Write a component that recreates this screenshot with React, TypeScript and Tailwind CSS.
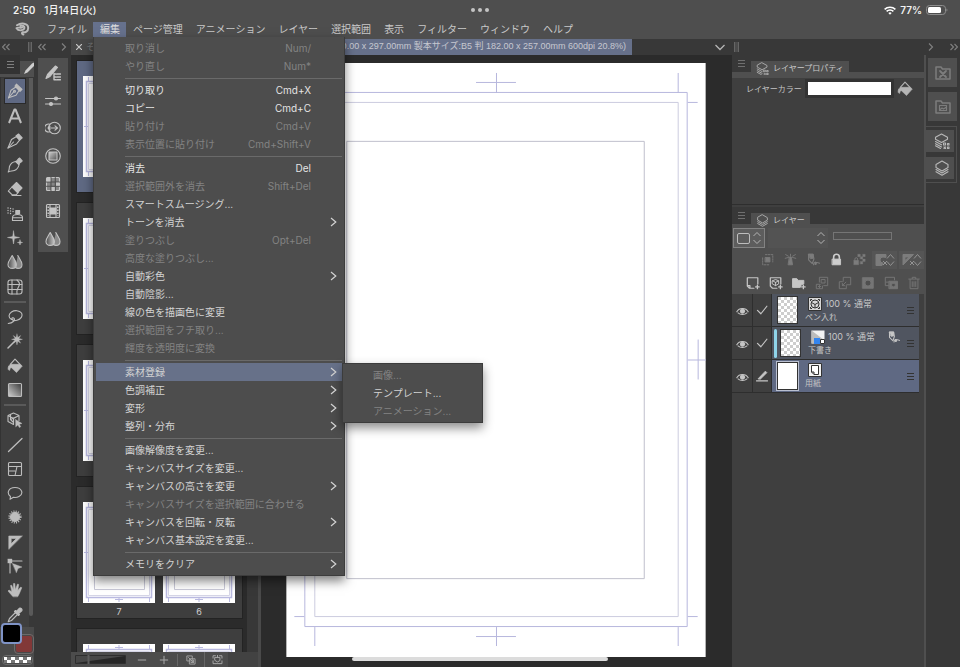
import { Fragment, type ReactNode } from "react";
import clsx from "clsx";

type MenuItem = {
  label: string;
  keys?: string;
  off?: boolean;
  arrow?: boolean;
  sub?: MenuItem[];
};

const MENUS = [
  "ファイル",
  "編集",
  "ページ管理",
  "アニメーション",
  "レイヤー",
  "選択範囲",
  "表示",
  "フィルター",
  "ウィンドウ",
  "ヘルプ",
];

const EDIT_MENU: MenuItem[][] = [
  [
    { label: "取り消し", keys: "Num/", off: true },
    { label: "やり直し", keys: "Num*", off: true },
  ],
  [
    { label: "切り取り", keys: "Cmd+X" },
    { label: "コピー", keys: "Cmd+C" },
    { label: "貼り付け", keys: "Cmd+V", off: true },
    { label: "表示位置に貼り付け", keys: "Cmd+Shift+V", off: true },
  ],
  [
    { label: "消去", keys: "Del" },
    { label: "選択範囲外を消去", keys: "Shift+Del", off: true },
    { label: "スマートスムージング..." },
    { label: "トーンを消去", arrow: true },
    { label: "塗りつぶし", keys: "Opt+Del", off: true },
    { label: "高度な塗りつぶし...", off: true },
    { label: "自動彩色", arrow: true },
    { label: "自動陰影..." },
    { label: "線の色を描画色に変更" },
    { label: "選択範囲をフチ取り...", off: true },
    { label: "輝度を透明度に変換", off: true },
  ],
  [
    {
      label: "素材登録",
      arrow: true,
      sub: [
        { label: "画像...", off: true },
        { label: "テンプレート..." },
        { label: "アニメーション...", off: true },
      ],
    },
    { label: "色調補正", arrow: true },
    { label: "変形", arrow: true },
    { label: "整列・分布", arrow: true },
  ],
  [
    { label: "画像解像度を変更..." },
    { label: "キャンバスサイズを変更..." },
    { label: "キャンバスの高さを変更", arrow: true },
    { label: "キャンバスサイズを選択範囲に合わせる", off: true },
    { label: "キャンバスを回転・反転", arrow: true },
    { label: "キャンバス基本設定を変更..." },
  ],
  [{ label: "メモリをクリア", arrow: true }],
];

/* ---------- icons ---------- */

function Icon({ children, size = 16 }: { children: ReactNode; size?: number }) {
  return (
    <svg
      width={size}
      height={size}
      viewBox="0 0 16 16"
      fill="none"
      stroke="currentColor"
      strokeWidth="1.1"
      strokeLinecap="round"
      strokeLinejoin="round"
      className="shrink-0"
      aria-hidden="true"
    >
      {children}
    </svg>
  );
}

const drops = (
  <>
    <defs>
      <linearGradient id="drop" x1="0" x2="1">
        <stop offset="0" stopColor="#4a4a4a" />
        <stop offset="1" stopColor="#c8c8c8" />
      </linearGradient>
    </defs>
    <path d="M10.8 1.6c1.6 3 4.2 5.6 4.2 8.8 0 2.5-1.8 4-4 4-1 0-1.8-.3-2.6-.9" fill="#8a8a8a" />
    <path d="M5.2 1.6c1.6 3 4.2 5.6 4.2 8.8 0 2.5-1.8 4-4.2 4s-4.2-1.5-4.2-4c0-3.2 2.600-5.8 4.200-8.800z" fill="url(#drop)" />
  </>
);

const bucket = (
  <>
    <path d="M3.300 6.300 8 1.200l5 5.100" />
    <path d="M4 6.300h9.300l2 1.700-5.800 6.500-5-4.700-1.300.2-.5 2.300c-1.800.4-2-2.300-1.100-4.200z" fill="currentColor" strokeWidth=".6" />
  </>
);

const layers = (
  <>
    <path d="M8 1 14 4.500v3L8 11 2 7.500v-3z" />
    <path d="M2 9.500 8 13l6-3.500M2 11.700 8 15.200l6-3.500" />
  </>
);

const layerProps = (
  <>
    <path d="M7.500 1 13.500 4.300v2L7.500 9.500 1.500 6.300v-2z" />
    <path d="M1.500 8.500 7.500 11.800M1.500 10.700l6 3.300M1.500 12.800l5 2.700" />
    <path d="M9.500 10h2v2h-2zM13.500 10.500h1.500v1.500h-1.500zM10 14l1.500 1.500M11.500 14 10 15.500M13.500 14h1.500v1.500h-1.500z" />
  </>
);

type Tool = { name: string; icon: ReactNode };

const TOOLS: Tool[][] = [
  [
    {
      name: "ペン",
      icon: (
        <>
          <path d="M1.500 14.800 4 7.200l5.200-3.400 3.200 3.200-3.400 5.200z" />
          <path d="M9.500 1.200 15 6.300l-2 2L8 3z" fill="currentColor" />
          <path d="M1.500 14.800 7 8.500" />
          <circle cx="7.500" cy="8.200" r="1" />
        </>
      ),
    },
    { name: "テキスト", icon: <path d="M2 15 7.500 1.500h1L14 15M4.500 10.500h7" strokeWidth="2" strokeLinecap="butt" /> },
    {
      name: "鉛筆",
      icon: (
        <>
          <path d="M1 15 4.500 6.500 9.500 3.500 12.800 6.800 9.500 11z" />
          <path d="M1 15 6.500 9" />
          <path d="M9 3 11.500 1 15.200 4.800 12.600 7.200z" fill="currentColor" />
        </>
      ),
    },
    {
      name: "筆",
      icon: (
        <>
          <path d="M1.200 15c1.300-2 .8-3.500 1.300-5.500C3.300 6.800 6 5 8.700 4.500L12 7.800c-.7 2.700-2.200 4.800-4.700 5.700-2 .8-4 .3-6.100 1.500z" />
          <path d="M9 4.200C10.500 4 10.800 1.500 12.500 1l2.700 2.800C14.500 5.500 12 5.500 12 7.500z" fill="currentColor" />
        </>
      ),
    },
    {
      name: "消しゴム",
      icon: (
        <>
          <path d="M9.500 1.500 15 7l-4.500 4.500L5 6z" fill="currentColor" />
          <path d="M5 6 1.300 10 5 13.700h4.300l2-2.200M5 14.500h9" />
        </>
      ),
    },
    {
      name: "エアブラシ",
      icon: (
        <>
          <path d="M5.500 14.500v-3c0-2 2-3 5-3s5 1 5 3v3z" />
          <path d="M8.800 7.500V4.500h3.800v3z" fill="currentColor" />
          <path d="M6 11.800h9" />
          <path d="M1 2h.1M3.500 2.500h.1M6 3h.1M1 4.500h.1M3.500 5h.1M6 5.500h.1M1 7h.1M3.500 7.500h.1" strokeWidth="1.300" />
        </>
      ),
    },
    {
      name: "デコレーション",
      icon: (
        <path
          d="M6.500 1 7.400 6.600 12.500 7.500 7.400 8.400 6.500 14 5.600 8.400.5 7.500 5.600 6.600zM13 10l.5 2 2 .5-2 .5-.5 2-.5-2-2-.5 2-.5z"
          fill="currentColor"
          strokeWidth=".5"
        />
      ),
    },
    { name: "色混ぜ", icon: drops },
    {
      name: "ゆがみ",
      icon: (
        <>
          <rect x="1" y="1" width="14" height="14" rx="2.500" />
          <path d="M5 1v14M1 5.500h9M1 10.500h9M10 1c3 3 3 4 1.500 7S9 12 10 15M10 5.500h5M10 10.500h5" />
        </>
      ),
    },
  ],
  [
    {
      name: "投げなわ",
      icon: (
        <path d="M4.500 10.500C1 8.500 1.500 5 4.500 3s8-1.800 10 1c1.500 3-.5 6.200-4.500 7.200-2.500.7-4.500.2-5-1.200s1.500-1.800 2.200-.5c.8 1.800-1.200 4.500-6 5" />
      ),
    },
    {
      name: "自動選択",
      icon: (
        <>
          <path d="M1 15 8 8" strokeWidth="1.500" />
          <path d="m10 1 .8 3.400L13.700 2.500l-1.800 3 3.600.8-3.600.9 1.800 3-2.900-1.900L10 12l-.9-3.700L6.200 10.200l1.900-3L4.500 6.300l3.600-.8-1.900-3 2.900 1.900z" fill="currentColor" strokeWidth=".3" />
        </>
      ),
    },
    { name: "塗りつぶし", icon: bucket },
    {
      name: "グラデーション",
      icon: (
        <>
          <defs>
            <linearGradient id="grad" x1="1" y1="0" x2="0" y2="1">
              <stop offset="0" stopColor="#3a3a3a" />
              <stop offset="1" stopColor="#d0d0d0" />
            </linearGradient>
          </defs>
          <rect x="1.500" y="1.500" width="13" height="13" rx="1" fill="url(#grad)" />
        </>
      ),
    },
  ],
  [
    {
      name: "操作",
      icon: (
        <>
          <path d="M6.500 1 12 3.500v5M6.500 1 1 3.500v6l5.500 3V6.500M1 3.500l5.500 3 5.500-3M3.500 2.500v5l3 3M3.500 7.500 9 5" />
          <path d="m8.500 7.500 6.500 4-2.700.7 1.500 2.500-1.500.8-1.400-2.600-2 1.800z" fill="currentColor" strokeWidth=".4" />
        </>
      ),
    },
    { name: "直線", icon: <path d="M1.500 14.500 15 1.500" strokeWidth="1.300" /> },
    {
      name: "コマ枠",
      icon: (
        <>
          <rect x="1.500" y="1.500" width="13" height="13" rx="1" />
          <path d="M1.500 5.500h13M1.500 10h6.500M10 5.500l-2 9" />
        </>
      ),
    },
    { name: "フキダシ", icon: <path d="M3.500 11.500C-.5 8.500 1 2.500 8 2.500s9 6.500 4 9c-2 1-4.300 1-5.500.8L3 14.300z" /> },
    {
      name: "流線",
      icon: (
        <>
          <circle cx="8" cy="8" r="4.500" fill="currentColor" />
          <circle cx="8" cy="8" r="5.700" strokeWidth="1.800" strokeDasharray="1 1.240" strokeLinecap="butt" />
        </>
      ),
    },
    { name: "定規", icon: <path d="M1.800 15V2h13.200zM4.200 9.500V4.500h5z" fill="currentColor" fillRule="evenodd" strokeWidth=".6" /> },
    {
      name: "線修正",
      icon: (
        <>
          <path d="M3 5v10M5 3h10" />
          <path d="M1 1h4v4H1zM5.500 5.500 15 9l-4 1.500L9.500 14.500z" fill="currentColor" strokeWidth=".4" />
        </>
      ),
    },
    {
      name: "手のひら",
      icon: (
        <path
          d="M5.800 14.500 1 9l1-1 2.800 1.800L3.500 3.500l1.200-.3 1.800 4.500V1.500h1.300l.6 6L10.500 2l1.200.4-.9 6L13.800 5l1 .7-2.500 6-1.500 2.800z"
          fill="currentColor"
          strokeWidth=".5"
        />
      ),
    },
    {
      name: "スポイト",
      icon: (
        <>
          <path d="M1.200 14.800 2.500 11.500 8.500 5.500l2 2-6 6z" />
          <path d="m7.500 4.500 4 4 1-1-1-1L14.800 3.800c.8-1.500-1-3.300-2.500-2.500L9.500 4.300 8.500 3.500z" fill="currentColor" />
        </>
      ),
    },
  ],
];

const PALETTES: Tool[] = [
  {
    name: "サブツール",
    icon: (
      <>
        <path d="M1 13.500 2.500 9.500 10.500 1l2 1.500-7.500 9z" fill="currentColor" />
        <path d="M9 8.500v6M9 9h2M9 12h2M9 14.800h2M12 9h3.500M12 12h3.500M12 14.800h3.500" strokeWidth="1.400" />
      </>
    ),
  },
  {
    name: "ツールプロパティ",
    icon: (
      <>
        <path d="M.5 5.500h15M.5 11h15" />
        <circle cx="11" cy="5.500" r="1.500" fill="currentColor" />
        <circle cx="6" cy="11" r="1.500" fill="currentColor" />
      </>
    ),
  },
  {
    name: "ブラシサイズ",
    icon: (
      <>
        <circle cx="9.500" cy="8" r="5.800" />
        <path d="M4.800 4.200a4 4 0 1 0 0 7.600M3.500 8h8.500M10 5.800 12.500 8 10 10.200M5 6.300 3 8l2 1.700" />
      </>
    ),
  },
  {
    name: "カラーサークル",
    icon: (
      <>
        <defs>
          <linearGradient id="sq" x1="1" y1="1" x2="0" y2="0">
            <stop offset="0" stopColor="#555" />
            <stop offset="1" stopColor="#ccc" />
          </linearGradient>
        </defs>
        <circle cx="8" cy="8" r="7.300" />
        <rect x="4" y="4" width="8" height="8" fill="url(#sq)" />
      </>
    ),
  },
  {
    name: "カラーセット",
    icon: (
      <>
        <rect x="1.500" y="1.500" width="13" height="13" rx="1" fill="#858585" />
        <path d="M6 1.500v13M10.300 1.500v13M1.500 6h13M1.500 10.300h13" stroke="#4f4f4f" />
        <path d="M2 2h3.500v3.500H2zM11 6.500h3v3.300h-3zM6.500 11h3.300v3.300H6.500z" fill="currentColor" stroke="none" />
      </>
    ),
  },
  {
    name: "タイムライン",
    icon: (
      <>
        <rect x="1.500" y="1.500" width="13" height="13" rx="1" />
        <path d="M5 2v12M11 2v12" />
        <path d="M5 5h6v6H5z" fill="currentColor" />
        <path d="M3.200 3.500v9.500M12.800 3.500v9.500" strokeWidth="1.500" strokeDasharray="1.500 1.500" strokeLinecap="butt" />
      </>
    ),
  },
  { name: "混色", icon: drops },
];

const reference = (
  <>
    <path d="M2 1.500h5.500l1 6L6.500 13 2 8.500z" strokeWidth="1.400" />
    <path d="M2 1.500h5.500v5L4.500 7z" fill="currentColor" />
    <path d="M8 14.500c0-4 4-4 3.500-1.500-.3 1.500-2 1.500-1.500 0 .5-1.200 3-1.500 5.500-.5" strokeWidth="1.400" />
  </>
);

const LAYER_TOGGLES: Tool[] = [
  {
    name: "下のレイヤーでクリッピング",
    icon: (
      <>
        <path d="M2 6v8.500h8.500M5.500 2h9v9" strokeDasharray="2 1.500" />
        <path d="M5.500 5.500h5.500V11H5.500z" fill="currentColor" />
      </>
    ),
  },
  {
    name: "参照レイヤー",
    icon: (
      <path d="M7 5h2l1.500 9.500h-5zM8 1.500V4M2 2l3.500 2M14 2l-3.500 2M1.500 6.500 5.500 5.500M14.500 6.500l-4-1" fill="currentColor" />
    ),
  },
  { name: "下描きレイヤー", icon: reference },
];

const plus = <path d="M13 10.500v4M11 12.500h4" strokeWidth="1.500" />;

const LAYER_COMMANDS: (Tool & { off?: boolean })[] = [
  {
    name: "新規ラスターレイヤー",
    icon: (
      <>
        <path d="M9 14H4L1.500 11.500V2h12v7M1.500 11H4.500v3" strokeWidth="1.400" />
        {plus}
      </>
    ),
  },
  {
    name: "新規ベクターレイヤー",
    icon: (
      <>
        <path d="M9 14H4L1.500 11.500V2h12v7" strokeWidth="1.400" />
        <path d="M4 5.500 7.500 4 11 5.500v3.500l-3.500 2L4 9zM4 5.500l3.500 1.800L11 5.500M7.500 7.300V11" />
        {plus}
      </>
    ),
  },
  {
    name: "新規レイヤーフォルダー",
    icon: (
      <>
        <path d="M1 3h4.500l1.500 2h6.500v4l-3 1-1 3H1z" fill="currentColor" />
        {plus}
      </>
    ),
  },
  {
    name: "下のレイヤーに転写",
    off: true,
    icon: <path d="M5 7V1.500h9.500V11H10M7.500 4h4v4h-4zM6 9.500H1.500v5h7v-3M6.500 12H4M5.500 10.500 4 12l1.500 1.500" />,
  },
  {
    name: "下のレイヤーと結合",
    off: true,
    icon: <path d="M6 6V1.500h8.500V10H10M9 7 5 11M5 8.500V11h2.500M5 6.500H1.500v8h8V11" />,
  },
  {
    name: "レイヤーマスクを作成",
    off: true,
    icon: <path d="M2 2h12v12H2zM8 4.500a3.500 3.500 0 1 0 0 7 3.500 3.500 0 0 0 0-7z" fill="currentColor" fillRule="evenodd" />,
  },
  {
    name: "マスクをレイヤーに適用",
    off: true,
    icon: (
      <>
        <path d="M12 4.500v-3H1.500V11H5M2.500 7H5" />
        <path d="M6 6h9.500v8.500H6zM10.800 8a2.200 2.200 0 1 0 0 4.400 2.200 2.200 0 0 0 0-4.400z" fill="currentColor" fillRule="evenodd" />
      </>
    ),
  },
  {
    name: "レイヤーを削除",
    off: true,
    icon: <path d="M2 3.500h12M6 3V1.500h4V3M3.500 4v10.500h9V4M6 6.500v5.500M8 6.500v5.500M10 6.500v5.500" />,
  },
];

function Hamburger() {
  return (
    <svg width="7" height="7" viewBox="0 0 7 7" stroke="currentColor" aria-hidden="true">
      <path d="M0 .5h7M0 3.500h7M0 6.500h7" />
    </svg>
  );
}

function Chevron({ double, left }: { double?: boolean; left?: boolean }) {
  return (
    <svg
      width="8"
      height="8"
      viewBox="0 0 8 8"
      fill="none"
      stroke="currentColor"
      strokeWidth="1.200"
      className={clsx("shrink-0", left && "rotate-180")}
      aria-hidden="true"
    >
      {double ? <path d="M.5 1 3.500 4 .5 7M4.500 1 7.500 4 4.500 7" /> : <path d="M2 .5 5.500 4 2 7.500" />}
    </svg>
  );
}

function UpDown() {
  return (
    <svg width="8" height="14" viewBox="0 0 8 14" fill="none" stroke="#b4b4b4" aria-hidden="true">
      <path d="M.5 5 4 1.500 7.500 5M.5 9 4 12.500 7.500 9" />
    </svg>
  );
}

/* ---------- header ---------- */

function StatusBar() {
  return (
    <div className="grid h-5 grid-cols-3 items-center pl-[13px] pr-3 text-[10px] font-semibold text-[#f2f2f2]">
      <div className="flex gap-[9px]">
        <span>2:50</span>
        <span className="font-medium">1月14日(火)</span>
      </div>
      <div className="flex justify-center gap-[3px]">
        {[0, 1, 2].map((i) => (
          <span key={i} className="size-1 rounded-full bg-[#c4c4c4]" />
        ))}
      </div>
      <div className="flex items-center justify-end gap-1">
        <svg width="12" height="9" viewBox="0 0 12 9" fill="none" stroke="#fff" strokeWidth="1.500" aria-hidden="true">
          <path d="M.6 3.400a7.600 7.600 0 0 1 10.800 0M2.600 5.400a4.800 4.800 0 0 1 6.800 0" />
          <path d="M4.300 7 6 8.800 7.700 7a2.400 2.400 0 0 0-3.400 0z" fill="#fff" stroke="none" />
        </svg>
        <span>77%</span>
        <svg width="22" height="10" viewBox="0 0 22 10" aria-hidden="true">
          <rect x=".5" y=".5" width="19" height="9" rx="3" fill="none" stroke="#8d8d8d" />
          <rect x="2" y="2" width="13" height="6" rx="1.500" fill="#fff" />
          <path d="M20.500 3.500c1.200.4 1.200 2.600 0 3z" fill="#8d8d8d" />
        </svg>
      </div>
    </div>
  );
}

function MenuRow({ item }: { item: MenuItem }) {
  return (
    <li className="relative" role="none">
      <button
        role="menuitem"
        disabled={item.off}
        className={clsx(
          "flex h-[18px] w-full items-center justify-between pl-[29px] pr-[5px] leading-[18px]",
          item.sub && "bg-[#677189]",
          item.off ? "text-[#838383]" : item.keys ? "text-[#e4e4e4]" : "text-[#d2d2d2]"
        )}
      >
        <span>{item.label}</span>
        {item.keys && <span className="pr-[26px]">{item.keys}</span>}
        {item.arrow && (
          <svg width="7" height="10" viewBox="0 0 7 10" fill="none" stroke="currentColor" strokeWidth="1.200" aria-hidden="true">
            <path d="M1 1 5.800 5 1 9" />
          </svg>
        )}
      </button>
      {item.sub && (
        <ul
          role="menu"
          className="absolute left-full top-0 w-[141px] border border-[#3c3c3c] bg-[#4d4d4d] px-px py-[2px] shadow-[0_5px_10px_rgba(0,0,0,0.45)]"
        >
          {item.sub.map((s) => (
            <MenuRow key={s.label} item={s} />
          ))}
        </ul>
      )}
    </li>
  );
}

function EditMenu() {
  return (
    <div
      role="menu"
      className="absolute left-0 top-full z-20 w-[252px] border-x border-b border-[#3c3c3c] bg-[#4d4d4d] px-[2px] py-[2px] shadow-[0_5px_10px_rgba(0,0,0,0.5)]"
    >
      {EDIT_MENU.map((group, i) => (
        <Fragment key={i}>
          {i > 0 && (
            <div className="flex h-1.5 items-center pl-[29px]">
              <hr className="w-full border-[#6a6a6a]" />
            </div>
          )}
          <ul role="none">
            {group.map((item) => (
              <MenuRow key={item.label} item={item} />
            ))}
          </ul>
        </Fragment>
      ))}
    </div>
  );
}

function MenuBar() {
  return (
    <nav className="flex h-[19px] items-start pl-[15px] pt-[2px] text-[10px] text-[#c9c9c9]">
      <svg width="25" height="14" viewBox="0 0 25 14" fill="none" stroke="#b9b9b9" strokeLinecap="round" aria-label="CLIP STUDIO PAINT">
        <path d="M7.500 5.500C5 6.500 3 4.500 1.500 6.200 3.500 9.500 9 8.500 9.500 5.800 9.800 4 7.500 3.200 5.200 3.800" strokeWidth="1.800" />
        <path d="M2 3.300C6 .5 13.200 1 13.200 6c0 3.500-3 4.700-5.400 4.200-1.400.8-.6 2 .6 2.300" strokeWidth="2" />
      </svg>
      {MENUS.map((m) => (
        <div key={m} className="relative">
          <button
            className={clsx(
              "block h-[15px] whitespace-nowrap pl-[7px] pr-[6px] leading-[15px]",
              m === "編集" && "bg-[#66718d] text-[#dedede]"
            )}
          >
            {m}
          </button>
          {m === "編集" && <EditMenu />}
        </div>
      ))}
    </nav>
  );
}

/* ---------- left side ---------- */

function ToolColumn() {
  return (
    <aside className="flex w-[34px] shrink-0 flex-col bg-[#383838]">
      <div className="flex h-4 items-center justify-between pl-[2px] pr-[2px] text-[#7f7f7f]">
        <Chevron double left />
        <span className="h-[10px] w-1 border-x border-[#666] bg-[#4c4c4c]" />
      </div>
      <div className="flex h-[22px] items-end border-b-[3px] border-[#4f4f4f] text-[#7f7f7f]">
        <span className="flex h-[19px] w-5 items-center justify-center bg-[#333]">
          <Hamburger />
        </span>
        <span className="flex h-[13px] flex-1 items-end justify-end bg-[#4f4f4f] text-[#cfcfcf]">
          <svg width="10" height="12" viewBox="0 0 10 12" fill="currentColor" aria-hidden="true">
            <path d="M0 12 1.500 8.500 8 1.500 10 .500V4L3.500 10.500z" />
          </svg>
        </span>
      </div>
      <div className="flex min-h-0 flex-1 border-l border-[#333] pt-px">
        <div className="flex flex-1 flex-col bg-[#3f3f3f] text-[#bdbdbd]">
          {TOOLS.map((group, i) => (
            <Fragment key={i}>
              {i > 0 && <hr className="mx-[3px] my-[2px] border-t-2 border-[#5a5a5a]" />}
              {group.map((t) => (
                <button
                  key={t.name}
                  aria-label={t.name}
                  className={clsx(
                    "mx-[3px] flex min-h-0 flex-1 items-center justify-center",
                    t.name === "ペン" && "border border-[#2a2a2a] bg-[#5f6983]"
                  )}
                >
                  <Icon>{t.icon}</Icon>
                </button>
              ))}
            </Fragment>
          ))}
        </div>
        <div className="w-[5px] bg-[#383838]">
          <div className="h-[98%] w-[4px] rounded-b-sm bg-[#5a5a5a]" />
        </div>
      </div>
      <div className="relative h-10 bg-[#4a4a4a]">
        <button
          aria-label="サブカラー"
          className="absolute left-[14px] top-[7px] size-[20px] rounded-sm border border-[#6b6b6b] bg-[#823838] ring-1 ring-inset ring-[#484848]"
        />
        <button
          aria-label="メインカラー"
          className="absolute -top-1 left-[1px] size-[21px] rounded-sm border-2 border-[#7f93c6] bg-black"
        />
        <button aria-label="透明色" className="absolute bottom-[2px] left-[2px] h-[10px] w-[31px] rounded-sm border border-[#6b6b6b]">
          <svg width="100%" height="100%" aria-hidden="true">
            <defs>
              <pattern id="clear" width="8" height="8" patternUnits="userSpaceOnUse">
                <path d="M0 0h8v8H0z" fill="#777" />
                <path d="M0 0h4v4H0zM4 4h4v4H4z" fill="#fff" />
              </pattern>
            </defs>
            <rect x="1" y="1" width="27" height="6" fill="url(#clear)" />
          </svg>
        </button>
      </div>
    </aside>
  );
}

function PaletteColumn() {
  return (
    <aside className="w-[37px] shrink-0 bg-[#383838] px-[3px] pl-1">
      <div className="flex h-4 items-center justify-between text-[#7f7f7f]">
        <Chevron double left />
        <Chevron />
      </div>
      <div className="mt-[3px] flex h-[194px] w-[30px] flex-col items-center justify-between bg-[#4f4f4f] pb-[5px] pt-[7px] text-[#c4c4c4]">
        {PALETTES.map((p) => (
          <button key={p.name} aria-label={p.name}>
            <Icon>{p.icon}</Icon>
          </button>
        ))}
      </div>
    </aside>
  );
}

function PageThumb() {
  return (
    <svg width="72" height="101" viewBox="0 0 72 101" fill="none" stroke="#b9b9e0" aria-hidden="true">
      <path d="M0 0h72v101H0z" fill="#fff" stroke="none" />
      <path d="M3.500 5.500h65v90h-65z" strokeWidth="1.500" />
      <path d="M5.500 7.500h61v86h-61z" stroke="#d5d5e6" />
      <path d="M11.500 13.500h50v74h-50z" stroke="#c9c9d8" />
      <path d="M5.500 1v4M66.500 1v4M5.500 96v4M66.500 96v4M36 1v5M36 95v5M32 3.500h8M32 97.500h8M1 50.500h4M67 50.500h4" />
    </svg>
  );
}

type Spread = { id: number; labels?: [string, string] };

const SPREADS: Spread[] = [{ id: 0 }, { id: 1 }, { id: 2 }, { id: 3, labels: ["7", "6"] }, { id: 4 }];

function PagesPanel() {
  return (
    <section className="flex w-[190px] shrink-0 flex-col border-r-[3px] border-[#4a4a4a] bg-[#383838]">
      <div className="min-h-0 w-[176px] flex-1 overflow-hidden bg-[#2b2b2b] pl-[5px] pt-[5px]">
        {SPREADS.map((s) => (
          <div
            key={s.id}
            className={clsx(
              "mb-[9px] h-[133px] w-[167px] border border-[#232323] px-[6px] pt-[15px]",
              s.id === 0 ? "bg-[#5f6983]" : "bg-[#3e3e3e]"
            )}
          >
            <div className="flex gap-2 text-center text-[9px] leading-[18px] text-[#cfcfcf]">
              {[0, 1].map((n) => (
                <div key={n}>
                  <PageThumb />
                  {s.labels?.[n]}
                </div>
              ))}
            </div>
          </div>
        ))}
      </div>
      <div className="flex h-[15px] items-center bg-[#424242] text-[#a8a8a8]">
        <div className="flex h-full w-[157px] items-center bg-[#4c4c4c] pl-1">
          <svg width="51" height="9" viewBox="0 0 51 9" aria-hidden="true">
            <path d="M.5.500h50v8H.5z" fill="#484848" stroke="#2e2e2e" />
            <path d="M1 8 50 1v7z" fill="#262626" />
            <path d="M13.500 0v9" stroke="#5d5d5d" strokeWidth="2" />
          </svg>
          <button aria-label="縮小" className="ml-[11px]">
            <Icon size={10}><path d="M2 8h12" strokeWidth="1.600" /></Icon>
          </button>
          <button aria-label="拡大" className="ml-3">
            <Icon size={10}><path d="M2 8h12M8 2v12" strokeWidth="1.600" /></Icon>
          </button>
          <span className="ml-2 h-3 w-px bg-[#666]" />
          <button aria-label="全体表示" className="ml-2">
            <Icon size={10}><path d="M2 1.500h8v8H2zM6 6h8.500v8.500H6zM4 4l8 8M8 12h4V8" strokeWidth="1.400" /></Icon>
          </button>
          <span className="ml-2 h-full w-px bg-[#666]" />
          <button aria-label="表示設定" className="ml-[7px]">
            <Icon size={11}>
              <path d="M5 2.500H1.500v3.500M1.500 10v4H5M11 2.500h3.500v3.500M14.500 10v4H11M4.500 5h7v4.500L8 11.500 4.500 9.500zM5.500 14h5M8 2v3" strokeWidth="1.400" />
            </Icon>
          </button>
        </div>
      </div>
    </section>
  );
}

/* ---------- canvas ---------- */

function Paper() {
  return (
    <svg viewBox="0 0 420 595" className="max-h-full w-[420px] max-w-full" fill="none" aria-label="用紙">
      <path d="M0 0h420v595H0z" fill="#fff" />
      <g stroke="#b7b7dd">
        <path d="M18.500 29.500h383v535h-383z" />
        <path d="M28.500 39.500h364v515h-364z" stroke="#ccccdf" />
        <path d="M60.500 78.500h298v438h-298z" stroke="#c0c0cc" />
        <path d="M28.500 10v20M392.500 10v20M28.500 565v19M392.500 565v19M8 39.500h10M402 39.500h10M8 554.500h10M402 554.500h10" />
        <path d="M210.500 10v20M190 19.500h40M210.500 565v19M190 574.500h40M402 297.500h19M412.500 277v40M-1 297.500h19M8.500 277v40" />
      </g>
    </svg>
  );
}

function Workspace() {
  return (
    <main className="flex min-w-0 flex-1 flex-col">
      <div className="flex h-4 items-center bg-[#383838] text-[9px]">
        <button className="flex h-full w-[150px] shrink-0 items-center gap-1 bg-[#484848] pl-[5px] text-[#777]">
          <svg width="6" height="6" viewBox="0 0 6 6" stroke="#c9c9c9" strokeWidth="1.200" aria-hidden="true">
            <path d="M0 0 6 6M6 0 0 6" />
          </svg>
          その他
        </button>
        <div className="flex h-full w-[411px] min-w-0 items-center justify-end overflow-hidden whitespace-nowrap bg-[#66708a] pr-[6px] font-['Liberation_Sans','Noto_Sans_CJK_JP',sans-serif] text-[#c6c8d0]">
          210.00 x 297.00mm 製本サイズ:B5 判 182.00 x 257.00mm 600dpi 20.8%)
        </div>
        <button aria-label="タブ一覧" className="ml-auto mr-[7px] text-[#b5b5b5]">
          <svg width="10" height="7" viewBox="0 0 10 7" fill="none" stroke="currentColor" strokeWidth="1.300" aria-hidden="true">
            <path d="M.5 1 5 5.500 9.500 1" />
          </svg>
        </button>
      </div>
      <div className="flex min-h-0 flex-1">
        <PagesPanel />
        <div className="flex min-w-0 flex-1 items-center justify-center bg-[#2b2b2b] pb-2.5 pr-[2px] pt-2">
          <Paper />
        </div>
      </div>
    </main>
  );
}

/* ---------- right side ---------- */

function PanelTab({ title, icon }: { title: string; icon: ReactNode }) {
  return (
    <div className="flex h-5 items-end border-b-[3px] border-[#4f4f4f] bg-[#383838] pl-[6px] text-[#6f6f6f]">
      <span className="pb-[5px]">
        <Hamburger />
      </span>
      <h2 className="ml-[6px] flex h-[11px] items-start gap-1 bg-[#4f4f4f] px-[5px] text-[8px] leading-3 text-[#c9c9c9]">
        <span className="pt-px text-[#b0b0b0]">
          <Icon size={13}>{icon}</Icon>
        </span>
        <span className="pt-px">{title}</span>
      </h2>
    </div>
  );
}

function LayerProperty() {
  return (
    <section className="h-[150px] border-b border-[#2e2e2e] bg-[#3f3f3f]">
      <PanelTab title="レイヤープロパティ" icon={layerProps} />
      <div className="h-[3px] bg-[#4f4f4f]" />
      <div className="mt-[1px] flex items-center pl-[14px] text-[#b5b5b5]">
        <label htmlFor="layer-color" className="text-[8px] text-[#c4c4c4]">
          レイヤーカラー
        </label>
        <button id="layer-color" aria-label="レイヤーカラー" className="mx-[3px] h-[19px] w-[89px] border-2 border-[#333] bg-white ring-1 ring-inset ring-[#333]" />
        <button aria-label="レイヤーカラーを適用">
          <Icon>{bucket}</Icon>
        </button>
      </div>
    </section>
  );
}

function LayerControls() {
  return (
    <div className="flex h-[67px] flex-col bg-[#4f4f4f] pt-px">
      <div className="flex h-5 items-center">
        <button aria-label="パレットカラー" className="ml-[1px] flex h-5 w-8 items-center justify-between border border-[#838383] bg-[#5d5d5d] px-[3px]">
          <span className="h-[11px] w-[13px] rounded-xs border border-[#bdbdbd]" />
          <UpDown />
        </button>
        <button aria-label="合成モード" className="ml-[3px] flex h-5 w-[60px] items-center justify-end bg-[#535353] pr-[3px]">
          <UpDown />
        </button>
        <span className="mb-[5px] ml-[5px] h-2 w-[59px] border border-[#757575]" />
      </div>
      <div className="flex h-[23px] items-center pl-[29px] text-[#7c7c7c]">
        <div className="flex gap-[10px]">
          {LAYER_TOGGLES.map((t) => (
            <button key={t.name} aria-label={t.name}>
              <Icon size={13}>{t.icon}</Icon>
            </button>
          ))}
          <button aria-label="レイヤーをロック" className="text-[#cdcdcd]">
            <Icon size={13}>
              <path d="M4.500 7V5a3.500 3.500 0 0 1 7 0v2" strokeWidth="2" />
              <path d="M3 7.500h10v7H3z" fill="currentColor" />
            </Icon>
          </button>
          <button aria-label="透明ピクセルをロック">
            <Icon size={13}>
              <path d="M1 9h6v5.500H1zM6 1.500h3v3H6zM12 1.500h3v3h-3zM9 4.500h3v3H9zM12 7.500h3v3h-3zM9 10.500h3v3H9z" fill="currentColor" strokeWidth=".4" />
              <path d="M2.300 9V7.500a1.700 1.700 0 0 1 3.400 0V9" />
            </Icon>
          </button>
        </div>
        <button aria-label="マスクを有効化" className="ml-[6px] flex h-[18px] w-[25px] items-center justify-center bg-[#555]">
          <svg width="20" height="14" viewBox="0 0 20 14" fill="none" stroke="currentColor" aria-hidden="true">
            <path d="M1 1.500h10v3l-3-.5a3 3 0 1 0 0 6l-1 2.500H1z" fill="currentColor" />
            <path d="m8 8 4 4M12 8l-4 4M12 5.500l3.500-4 3.500 4M12 8.500l3.500 4 3.500-4" stroke="#939393" />
          </svg>
        </button>
        <button aria-label="定規の表示範囲" className="ml-[2px] flex h-[18px] w-[25px] items-center justify-center bg-[#555]">
          <svg width="20" height="14" viewBox="0 0 20 14" fill="none" stroke="currentColor" aria-hidden="true">
            <path d="M1 12V1.500h10.500zM3 7.500V4h4z" fill="currentColor" fillRule="evenodd" />
            <path d="m8 8 4 4M12 8l-4 4M12 5.500l3.500-4 3.500 4M12 8.500l3.500 4 3.500-4" stroke="#939393" />
          </svg>
        </button>
      </div>
      <div className="flex flex-1 items-center gap-[9px] pl-[14px]">
        {LAYER_COMMANDS.map((c) => (
          <button key={c.name} aria-label={c.name} className={c.off ? "text-[#757575]" : "text-[#c6c6c6]"}>
            <Icon size={14}>{c.icon}</Icon>
          </button>
        ))}
      </div>
    </div>
  );
}

const EYE = (
  <Icon size={13}>
    <path d="M1 9.500c3-5.300 11-5.300 14 0M2.500 11c3 2.700 8 2.700 11 0" strokeWidth="1.300" />
    <circle cx="8" cy="8.800" r="2.700" fill="currentColor" />
  </Icon>
);

type Layer = { name: string; kind: "vector" | "draft" | "paper"; mode?: string };

const LAYERS: Layer[] = [
  { name: "ペン入れ", kind: "vector", mode: "100 % 通常" },
  { name: "下書き", kind: "draft", mode: "100 % 通常" },
  { name: "用紙", kind: "paper" },
];

function LayerBadge({ kind }: { kind: Layer["kind"] }) {
  return (
    <svg width="14" height="14" viewBox="0 0 14 14" fill="none" stroke="#333" aria-hidden="true">
      <path d="M.5.500h13v13H.5z" fill={kind === "vector" ? "#d6d6d6" : "#f2f2f2"} stroke={kind === "draft" ? "none" : "#333"} />
      {kind === "vector" && (
        <>
          <circle cx="7" cy="7" r="4" />
          <path d="M3.500 5.500 7 7.500l3.500-2M7 7.500V11M2.500 4V2.500H4M10 2.500h1.500V4M2.500 10v1.500H4M10 11.500h1.500V10" />
        </>
      )}
      {kind === "draft" && (
        <>
          <path d="M.5.500 13 10V13.500H.5z" fill="#bcbcbc" stroke="none" />
          <path d="M3 8h6v6H3z" fill="#3385f0" stroke="none" />
          <path d="M9.500 9.500h4v4h-4z" fill="#fff" />
        </>
      )}
      {kind === "paper" && <path d="M3.500 2.500h7v9H6L3.500 9zM3.500 9H6v2.500" fill="#fff" />}
    </svg>
  );
}

function LayerRow({ layer }: { layer: Layer }) {
  const paper = layer.kind === "paper";
  return (
    <li className="mr-[5px] flex h-[33px] border-b border-[#2e2e2e] text-[#c6c6c6]">
      <button aria-label="レイヤーの表示" className="ml-[1px] flex w-5 items-center justify-center border-r border-[#2e2e2e]">
        {EYE}
      </button>
      <button aria-label="選択" className="flex w-[19px] items-center justify-center border-r border-[#2e2e2e]">
        <Icon size={12}>
          {paper ? (
            <>
              <path d="M3 11.500 12.500 1.500 14.500 3.500 6 12z" fill="currentColor" />
              <path d="M.5 14.500h15" strokeWidth="1.500" />
            </>
          ) : (
            <path d="M2 8.500 6.500 13 14.500 3" strokeWidth="1.600" />
          )}
        </Icon>
      </button>
      <div className={clsx("flex min-w-0 flex-1 items-center", paper ? "bg-[#5f6983]" : "bg-[#505560]")}>
        {layer.kind === "draft" && <span className="ml-[2px] h-[29px] w-[3px] rounded-xs bg-[#8fd4ea]" />}
        <svg
          width="21"
          height="28"
          className={clsx(
            "shrink-0 border border-[#333]",
            layer.kind === "draft" ? "ml-[3px]" : "ml-[5px]",
            paper && "outline-1 outline-[#b9bfd0]"
          )}
          aria-hidden="true"
        >
          <defs>
            <pattern id="alpha" width="6" height="6" patternUnits="userSpaceOnUse">
              <path d="M0 0h6v6H0z" fill="#fff" />
              <path d="M0 0h3v3H0zM3 3h3v3H3z" fill="#cdcdcd" />
            </pattern>
          </defs>
          <rect width="100%" height="100%" fill={paper ? "#fff" : "url(#alpha)"} />
        </svg>
        <div className="ml-[7px] pb-px text-[8px] leading-3">
          <div className="flex h-[15px] items-center gap-[3px] pl-[3px] text-[9px]">
            <LayerBadge kind={layer.kind} />
            <span className="whitespace-nowrap">{layer.mode}</span>
            {layer.kind === "draft" && (
              <span className="ml-[10px]">
                <Icon size={12}>{reference}</Icon>
              </span>
            )}
          </div>
          {layer.name}
        </div>
        <span className="ml-auto mr-[5px] text-[#333]">
          <Hamburger />
        </span>
      </div>
    </li>
  );
}

function RightDock() {
  return (
    <aside className="flex w-[228px] shrink-0 flex-col bg-[#383838]">
      <div className="flex h-4 items-center pl-[2px] pr-[2px] text-[#7f7f7f]">
        <span className="h-[10px] w-[5px] border-x border-[#666] bg-[#4c4c4c]" />
        <span className="ml-auto">
          <Chevron />
        </span>
        <span className="ml-[15px]">
          <Chevron double />
        </span>
      </div>
      <div className="flex min-h-0 flex-1">
        <div className="flex w-48 flex-col bg-[#3f3f3f]">
          <LayerProperty />
          <section className="mt-[2px] flex-1">
            <PanelTab title="レイヤー" icon={layers} />
            <LayerControls />
            <ul>
              {LAYERS.map((l) => (
                <LayerRow key={l.name} layer={l} />
              ))}
            </ul>
          </section>
        </div>
        <div className="flex-1 border-l-2 border-[#4f4f4f] pr-[3px] pt-[3px] text-[#7d7d7d]">
          <div className="flex flex-col gap-[5px] pl-[2px]">
            <button aria-label="素材" className="flex h-[29px] items-center justify-center bg-[#4f4f4f]">
              <Icon>
                <path d="M1 2h5l1.500 2H15v10H1z" strokeWidth="1.500" />
                <path d="M5 6l6 6M11 6l-6 6" strokeWidth="1.800" />
              </Icon>
            </button>
            <button aria-label="画像素材" className="flex h-[29px] items-center justify-center bg-[#4f4f4f]">
              <Icon>
                <path d="M1 2h5l1.500 2H15v10H1z" strokeWidth="1.500" />
                <path d="M4.500 6.500h7v5h-7zM4.500 11l2.500-2 1.500 1 3-2" />
              </Icon>
            </button>
          </div>
          <div className="mt-[5px] flex flex-col gap-[5px] border-y border-r border-[#4f4f4f] py-[3px] pr-[2px] text-[#b8b8b8]">
            <button aria-label="レイヤープロパティ" className="flex h-[22px] items-center justify-center bg-[#4f4f4f] pl-1">
              <Icon>{layerProps}</Icon>
            </button>
            <button aria-label="レイヤー" className="flex h-[22px] items-center justify-center bg-[#4f4f4f] pl-1">
              <Icon>{layers}</Icon>
            </button>
          </div>
        </div>
      </div>
    </aside>
  );
}

export default function App() {
  return (
    <div className="relative flex h-screen flex-col overflow-hidden bg-[#383838] font-[Inter,'Noto_Sans_CJK_JP',sans-serif]" lang="ja">
      <header className="relative z-10 bg-[#4e4e4e]">
        <StatusBar />
        <MenuBar />
      </header>
      <div className="flex min-h-0 flex-1">
        <ToolColumn />
        <PaletteColumn />
        <Workspace />
        <RightDock />
      </div>
      {/* home indicator */}
      <div className="absolute bottom-[6px] left-1/2 h-1 w-64 -translate-x-1/2 rounded-full bg-[#dcdcdc]" />
    </div>
  );
}
